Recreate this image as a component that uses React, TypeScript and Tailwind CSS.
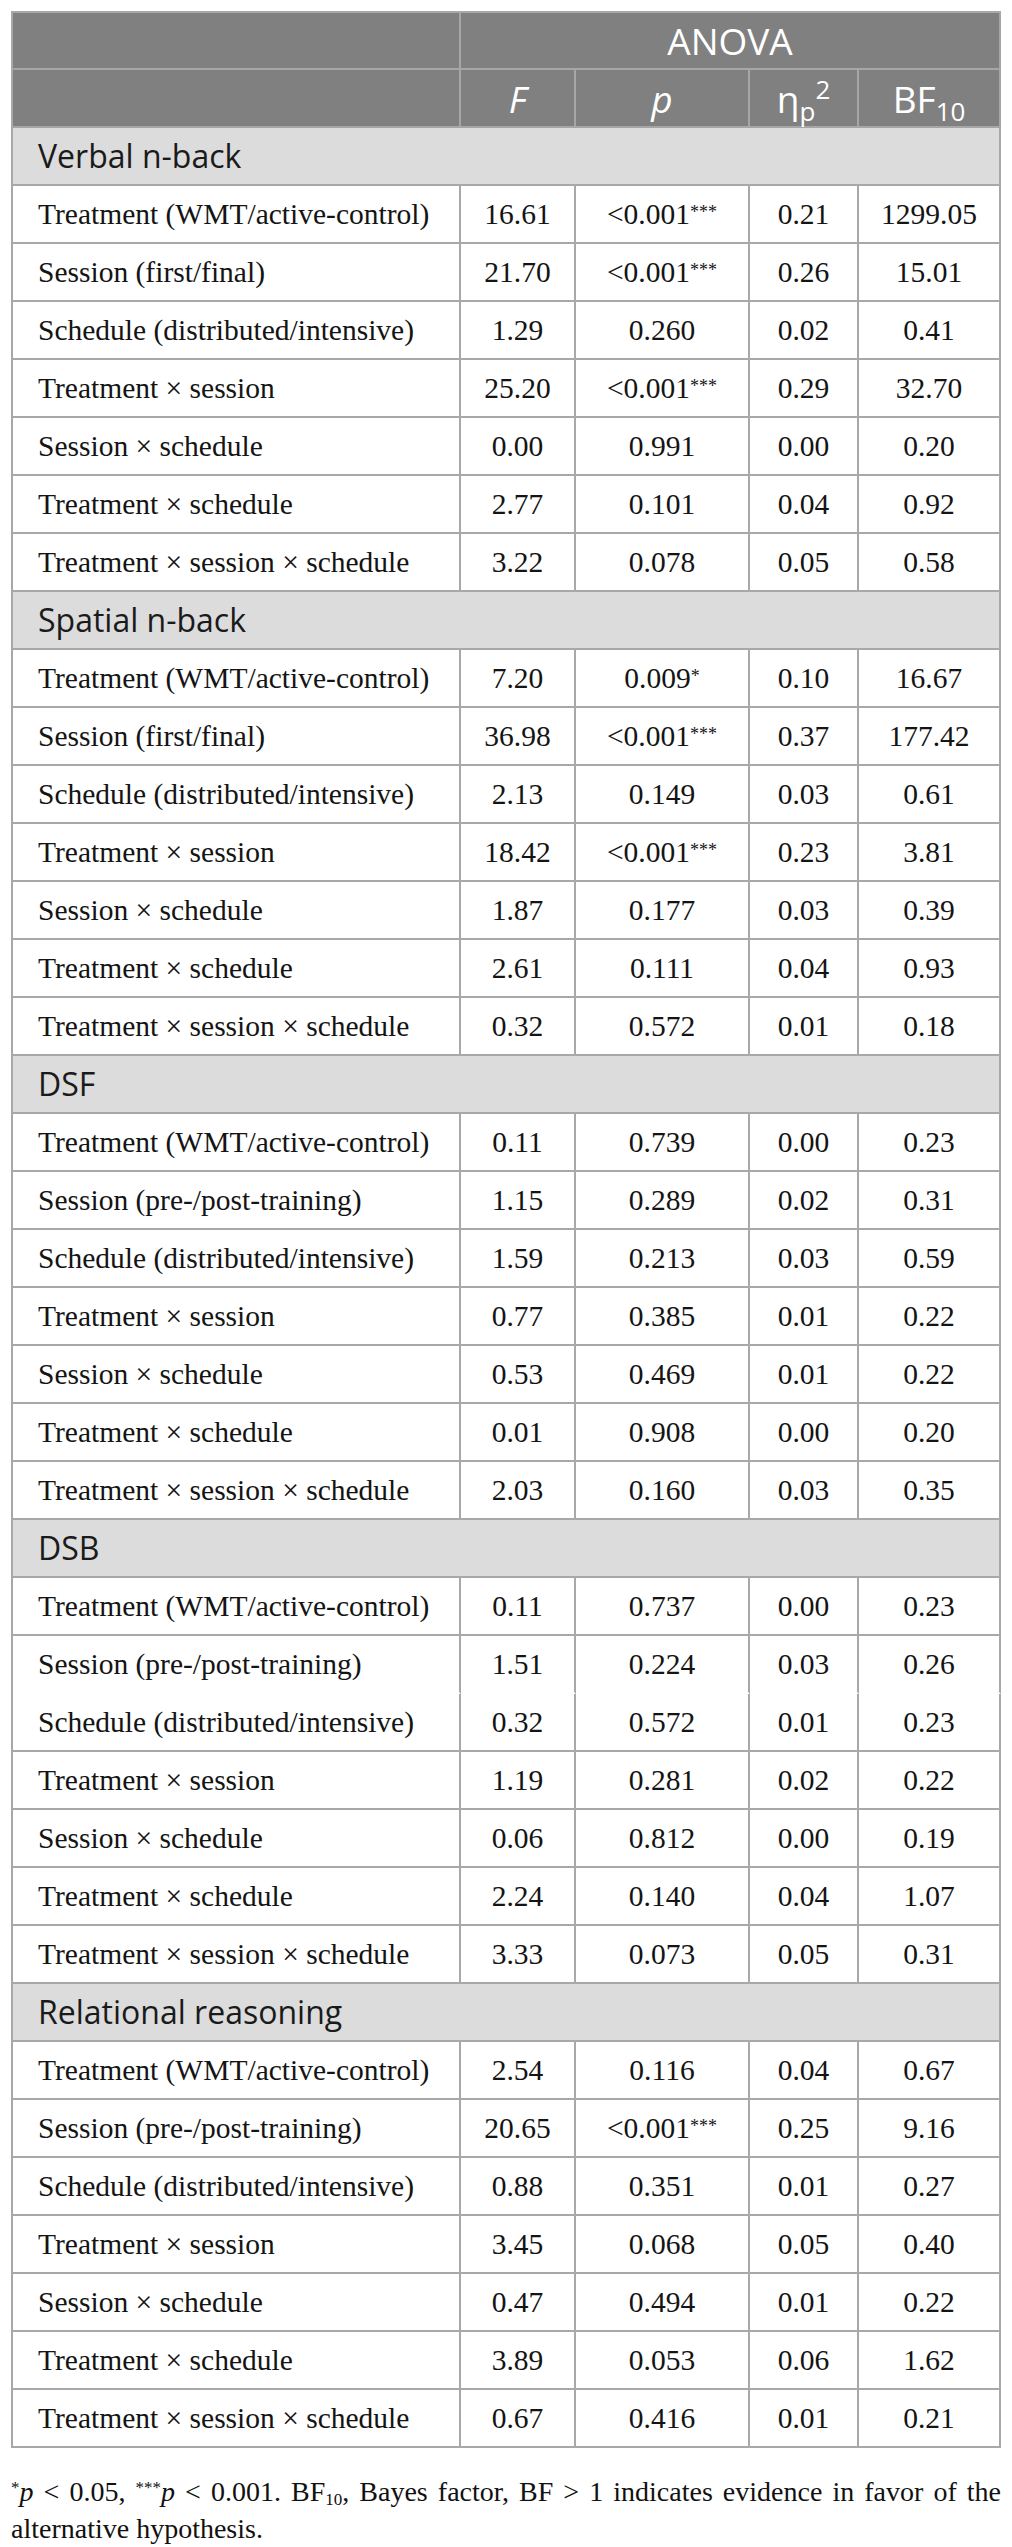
import React from "react";

type Row = [string, string, string, string, string];
type Section = { title: string; rows: Row[]; noLineAfter?: number };

const sections: Section[] = [
  {
    title: "Verbal n-back",
    rows: [
      ["Treatment (WMT/active-control)", "16.61", "<0.001***", "0.21", "1299.05"],
      ["Session (first/final)", "21.70", "<0.001***", "0.26", "15.01"],
      ["Schedule (distributed/intensive)", "1.29", "0.260", "0.02", "0.41"],
      ["Treatment × session", "25.20", "<0.001***", "0.29", "32.70"],
      ["Session × schedule", "0.00", "0.991", "0.00", "0.20"],
      ["Treatment × schedule", "2.77", "0.101", "0.04", "0.92"],
      ["Treatment × session × schedule", "3.22", "0.078", "0.05", "0.58"],
    ],
  },
  {
    title: "Spatial n-back",
    rows: [
      ["Treatment (WMT/active-control)", "7.20", "0.009*", "0.10", "16.67"],
      ["Session (first/final)", "36.98", "<0.001***", "0.37", "177.42"],
      ["Schedule (distributed/intensive)", "2.13", "0.149", "0.03", "0.61"],
      ["Treatment × session", "18.42", "<0.001***", "0.23", "3.81"],
      ["Session × schedule", "1.87", "0.177", "0.03", "0.39"],
      ["Treatment × schedule", "2.61", "0.111", "0.04", "0.93"],
      ["Treatment × session × schedule", "0.32", "0.572", "0.01", "0.18"],
    ],
  },
  {
    title: "DSF",
    rows: [
      ["Treatment (WMT/active-control)", "0.11", "0.739", "0.00", "0.23"],
      ["Session (pre-/post-training)", "1.15", "0.289", "0.02", "0.31"],
      ["Schedule (distributed/intensive)", "1.59", "0.213", "0.03", "0.59"],
      ["Treatment × session", "0.77", "0.385", "0.01", "0.22"],
      ["Session × schedule", "0.53", "0.469", "0.01", "0.22"],
      ["Treatment × schedule", "0.01", "0.908", "0.00", "0.20"],
      ["Treatment × session × schedule", "2.03", "0.160", "0.03", "0.35"],
    ],
  },
  {
    title: "DSB",
    noLineAfter: 1,
    rows: [
      ["Treatment (WMT/active-control)", "0.11", "0.737", "0.00", "0.23"],
      ["Session (pre-/post-training)", "1.51", "0.224", "0.03", "0.26"],
      ["Schedule (distributed/intensive)", "0.32", "0.572", "0.01", "0.23"],
      ["Treatment × session", "1.19", "0.281", "0.02", "0.22"],
      ["Session × schedule", "0.06", "0.812", "0.00", "0.19"],
      ["Treatment × schedule", "2.24", "0.140", "0.04", "1.07"],
      ["Treatment × session × schedule", "3.33", "0.073", "0.05", "0.31"],
    ],
  },
  {
    title: "Relational reasoning",
    rows: [
      ["Treatment (WMT/active-control)", "2.54", "0.116", "0.04", "0.67"],
      ["Session (pre-/post-training)", "20.65", "<0.001***", "0.25", "9.16"],
      ["Schedule (distributed/intensive)", "0.88", "0.351", "0.01", "0.27"],
      ["Treatment × session", "3.45", "0.068", "0.05", "0.40"],
      ["Session × schedule", "0.47", "0.494", "0.01", "0.22"],
      ["Treatment × schedule", "3.89", "0.053", "0.06", "1.62"],
      ["Treatment × session × schedule", "0.67", "0.416", "0.01", "0.21"],
    ],
  },
];

const GRID = "grid grid-cols-[448px_115px_174px_109px_142px]";
const SERIF = "[font-family:'Liberation_Serif','Times_New_Roman',serif]";
const SANS = "[font-family:'Open_Sans','Noto_Sans',sans-serif]";

function PValue({ v }: { v: string }) {
  const m = v.match(/^([^*]+)(\*+)$/);
  if (!m) return <>{v}</>;
  return (
    <>
      {m[1]}
      <sup className="text-[18px] relative top-[-2px]">{m[2]}</sup>
    </>
  );
}

function DataRow({ row, noLine }: { row: Row; noLine?: boolean }) {
  const b = noLine ? "border-b-2 border-b-white" : "border-b-2 border-b-[#a8a8a8]";
  return (
    <div className={`${GRID} h-[58px] bg-white ${SERIF} text-[29.5px] text-[#141414]`}>
      <div className={`flex items-center pl-[25px] border-r-2 border-r-[#a8a8a8] ${b} whitespace-nowrap ${SERIF}`}>
        {row[0]}
      </div>
      {row.slice(1).map((c, i) => (
        <div
          key={i}
          className={`flex items-center justify-center border-r-2 border-r-[#a8a8a8] ${b} whitespace-nowrap ${SERIF}`}
        >
          {i === 1 ? <PValue v={c} /> : c}
        </div>
      ))}
    </div>
  );
}

export default function App() {
  return (
    <div className="bg-white w-[1012px] min-h-[2547px] pt-[11px] px-[11px]">
      <div className="w-[990px] border-l-2 border-t-2 border-[#a8a8a8]">
        {/* header row 1 */}
        <div className={`${GRID} h-[57px] bg-[#808080] ${SANS} text-white text-[37px]`}>
          <div className="border-r-2 border-b-2 border-[#a6a6a6]" />
          <div className="col-span-4 flex items-center justify-center border-r-2 border-b-2 border-[#a6a6a6] leading-none">
            ANOVA
          </div>
        </div>
        {/* header row 2 */}
        <div className={`${GRID} h-[58px] bg-[#808080] ${SANS} text-white text-[37px] leading-none`}>
          <div className="border-r-2 border-b-2 border-[#a6a6a6]" />
          <div className="flex items-center justify-center border-r-2 border-b-2 border-[#a6a6a6] italic">
            F
          </div>
          <div className="flex items-center justify-center border-r-2 border-b-2 border-[#a6a6a6] italic">
            p
          </div>
          <div className="flex items-center justify-center border-r-2 border-b-2 border-[#a6a6a6]">
            <span className="relative">
              η<span className="text-[26px] relative top-[8px]">p</span>
              <span className="text-[26px] relative top-[-14px]">2</span>
            </span>
          </div>
          <div className="flex items-center justify-center border-r-2 border-b-2 border-[#a6a6a6]">
            <span>
              BF<span className="text-[26px] relative top-[8px]">10</span>
            </span>
          </div>
        </div>
        {sections.map((s) => (
          <div key={s.title}>
            <div
              className={`h-[58px] bg-[#dcdcdc] flex items-center pl-[25px] border-r-2 border-b-2 border-[#a8a8a8] ${SANS} text-[32px] text-[#1a1a1a]`}
            >
              {s.title}
            </div>
            {s.rows.map((r, i) => (
              <DataRow key={i} row={r} noLine={s.noLineAfter === i} />
            ))}
          </div>
        ))}
      </div>
      <p className={`mt-[25px] w-[990px] ${SERIF} text-[28px] leading-[37px] text-[#111] text-justify`}>
        <sup className="text-[17px] leading-none">*</sup>
        <i>p</i> &lt; 0.05, <sup className="text-[17px] leading-none">***</sup>
        <i>p</i> &lt; 0.001. BF<sub className="text-[17px] leading-none">10</sub>, Bayes factor, BF &gt; 1 indicates
        evidence in favor of the alternative hypothesis.
      </p>
    </div>
  );
}
